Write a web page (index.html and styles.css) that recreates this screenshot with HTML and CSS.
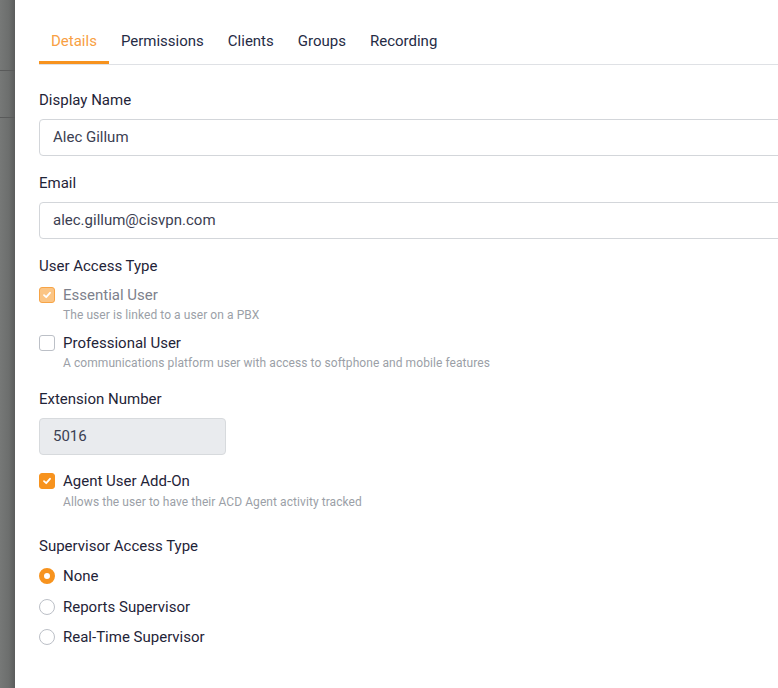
FILE: index.html
```html
<!DOCTYPE html>
<html>
<head>
<meta charset="utf-8">
<title>User details</title>
<link rel="stylesheet" href="styles.css">
</head>
<body>
<div class="screen">
  <div class="backdrop">
    <div class="backdrop-row first"></div>
    <div class="backdrop-row"></div>
    <div class="backdrop-row last"></div>
  </div>

  <div class="drawer">
    <div class="tabs">
      <div class="tab active">Details</div>
      <div class="tab">Permissions</div>
      <div class="tab">Clients</div>
      <div class="tab">Groups</div>
      <div class="tab">Recording</div>
    </div>

    <div class="form">
      <div class="field">
        <div class="label">Display Name</div>
        <div class="input">Alec Gillum</div>
      </div>

      <div class="field">
        <div class="label">Email</div>
        <div class="input">alec.gillum@cisvpn.com</div>
      </div>

      <div class="field access">
        <div class="label">User Access Type</div>
        <div class="options">
          <div class="option disabled">
            <span class="check checked">
              <svg width="10" height="10" viewBox="0 0 10 10"><polyline points="2,5.2 4.2,7.2 8,2.8" fill="none" stroke="#fff" stroke-width="1.8" stroke-linecap="round" stroke-linejoin="round"/></svg>
            </span>
            <div>
              <div class="option-title">Essential User</div>
              <div class="option-desc">The user is linked to a user on a PBX</div>
            </div>
          </div>
          <div class="option">
            <span class="check"></span>
            <div>
              <div class="option-title">Professional User</div>
              <div class="option-desc">A communications platform user with access to softphone and mobile features</div>
            </div>
          </div>
        </div>
      </div>

      <div class="field extension">
        <div class="label">Extension Number</div>
        <div class="input short readonly">5016</div>
      </div>

      <div class="field addon">
        <div class="option">
          <span class="check checked">
            <svg width="10" height="10" viewBox="0 0 10 10"><polyline points="2,5.2 4.2,7.2 8,2.8" fill="none" stroke="#fff" stroke-width="1.8" stroke-linecap="round" stroke-linejoin="round"/></svg>
          </span>
          <div>
            <div class="option-title">Agent User Add-On</div>
            <div class="option-desc">Allows the user to have their ACD Agent activity tracked</div>
          </div>
        </div>
      </div>

      <div class="field">
        <div class="label">Supervisor Access Type</div>
        <div class="radios">
          <div class="radio-row"><span class="radio selected"></span>None</div>
          <div class="radio-row"><span class="radio"></span>Reports Supervisor</div>
          <div class="radio-row"><span class="radio"></span>Real-Time Supervisor</div>
        </div>
      </div>
    </div>
  </div>
</div>
</body>
</html>
```

FILE: styles.css
```css
html, body {margin:0; padding:0;}
body {font-family: Roboto, "Liberation Sans", Arial, sans-serif; color:#1f2438; background:#fff;}

.screen {display:flex; width:778px; height:688px; overflow:hidden;}

/* dimmed page behind the drawer */
.backdrop {flex:0 0 15px; display:flex; flex-direction:column; background:linear-gradient(to right, #767877 0%, #6c6e6d 60%, #5b5c5c 100%);}
.backdrop-row {height:46px; border-bottom:1px solid #595a5a;}
.backdrop-row.first {height:70px;}
.backdrop-row.last {flex:1; border-bottom:none;}

.drawer {flex:0 0 820px; background:#fff; padding:20px 0 0 24px; box-sizing:border-box;}

.tabs {display:flex; border-bottom:1px solid #dfe1e5;}
.tab {font-size:15px; line-height:18px; padding:12px 12px 11px 12px; border-bottom:3px solid transparent; color:#262b45;}
.tab.active {color:#f8a043; border-bottom-color:#f7931e;}

.form {padding-top:26px;}
.field {margin-bottom:18px;}
.label {font-size:15px; line-height:18px; margin-bottom:10px; color:#1f2438;}

.input {height:37px; box-sizing:border-box; border:1px solid #d3d6da; border-radius:4px; padding:0 13px; font-size:15px; line-height:35px; color:#3b4052;}
.input.short {width:187px;}
.input.readonly {background:#e9ebee; border-color:#d7dadd;}

.options {padding-top:1px;}
.option {display:flex; gap:8px; margin-bottom:11px;}
.option:last-child {margin-bottom:0;}
.check {flex:0 0 16px; width:16px; height:16px; box-sizing:border-box; border:1px solid #bcc0c7; border-radius:3px; margin-top:1px; display:flex; align-items:center; justify-content:center; background:#fff;}
.check.checked {background:#f7931e; border-color:#f7931e;}
.option.disabled .check.checked {background:#fbc585; border-color:#f7a446;}
.option-title {font-size:15px; line-height:18px; color:#1f2438;}
.option.disabled .option-title {color:#7d818c;}
.option-desc {font-size:12px; line-height:15px; margin-top:4px; color:#9b9fa7; letter-spacing:0.07px;}

.field.access {margin-bottom:19px;}
.field.extension {margin-bottom:17px;}
.field.addon {margin-bottom:27px;}
.field.addon .option-desc {margin-top:5px;}

.radios {display:flex; flex-direction:column; gap:12.5px; padding-top:2px;}
.radio-row {display:flex; align-items:center; gap:8px; font-size:15px; line-height:18px; color:#1f2438;}
.radio {width:16px; height:16px; box-sizing:border-box; border:1px solid #bcc0c7; border-radius:50%; background:#fff;}
.radio.selected {border:5px solid #f7931e;}
```
